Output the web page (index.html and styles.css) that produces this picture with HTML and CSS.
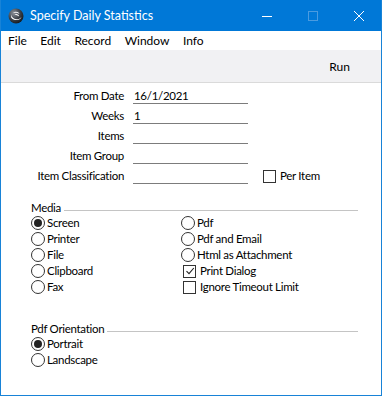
FILE: index.html
```html
<!DOCTYPE html>
<html lang="en">
<head>
    <meta charset="UTF-8">
    <title>Specify Daily Statistics</title>
    <link rel="stylesheet" href="styles.css">
</head>
<body>
    <div class="window">
        <!-- Title bar -->
        <div class="titlebar">
            <svg class="app-icon" width="16" height="16" viewBox="0 0 16 16">
                <defs>
                    <radialGradient id="ball" cx="35%" cy="30%" r="75%">
                        <stop offset="0" stop-color="#8a9099"/>
                        <stop offset="0.6" stop-color="#3a3f46"/>
                        <stop offset="1" stop-color="#15181c"/>
                    </radialGradient>
                </defs>
                <circle cx="8" cy="8" r="7.5" fill="url(#ball)"/>
                <path d="M3 6.5 C4 11 10 13.5 13.5 9 C12.5 12.5 6 13.5 3.2 9.5 Z" fill="#fff"/>
                <path d="M5 5 C7 3 10.5 3.5 11.5 6 C10 4.8 7.5 4.5 5 5 Z" fill="#fff"/>
                <path d="M6.5 6.5 C8.5 5.5 11 6.5 11.2 8.5 C9.5 7.2 8 7 6.5 6.5 Z" fill="#fff"/>
            </svg>
            <span class="title">Specify Daily Statistics</span>
            <div class="controls">
                <span class="ctl"><svg width="10" height="10" viewBox="0 0 10 10"><path d="M0 5.5h10" stroke="#fff" stroke-width="1"/></svg></span>
                <span class="ctl"><svg width="10" height="10" viewBox="0 0 10 10"><rect x="0.5" y="0.5" width="9" height="9" fill="none" stroke="#4a9be0" stroke-width="1"/></svg></span>
                <span class="ctl"><svg width="10" height="10" viewBox="0 0 10 10"><path d="M0 0L10 10M10 0L0 10" stroke="#fff" stroke-width="1"/></svg></span>
            </div>
        </div>

        <!-- Menu bar -->
        <div class="menubar">
            <span>File</span>
            <span>Edit</span>
            <span>Record</span>
            <span>Window</span>
            <span>Info</span>
        </div>

        <!-- Button bar -->
        <div class="toolbar">
            <span class="run">Run</span>
        </div>

        <div class="content">
            <!-- Specification fields -->
            <div class="form">
                <label>From Date</label><div class="field">16/1/2021</div><div></div>
                <label>Weeks</label><div class="field">1</div><div></div>
                <label>Items</label><div class="field"></div><div></div>
                <label>Item Group</label><div class="field"></div><div></div>
                <label>Item Classification</label><div class="field"></div>
                <div class="check"><span class="box"></span>Per Item</div>
            </div>

            <!-- Media -->
            <div class="section">
                <div class="section-head"><span>Media</span><div class="rule"></div></div>
                <div class="columns">
                    <div class="col">
                        <div class="radio on"><span class="dot"></span>Screen</div>
                        <div class="radio"><span class="dot"></span>Printer</div>
                        <div class="radio"><span class="dot"></span>File</div>
                        <div class="radio"><span class="dot"></span>Clipboard</div>
                        <div class="radio"><span class="dot"></span>Fax</div>
                    </div>
                    <div class="col">
                        <div class="radio"><span class="dot"></span>Pdf</div>
                        <div class="radio"><span class="dot"></span>Pdf and Email</div>
                        <div class="radio"><span class="dot"></span>Html as Attachment</div>
                        <div class="check indent"><span class="box ticked"><svg width="10" height="10" viewBox="0 0 10 10"><path d="M1.5 5.2L4 7.7L8.8 2" fill="none" stroke="#222" stroke-width="1.1"/></svg></span>Print Dialog</div>
                        <div class="check indent"><span class="box"></span>Ignore Timeout Limit</div>
                    </div>
                </div>
            </div>

            <!-- Pdf Orientation -->
            <div class="section orientation">
                <div class="section-head"><span>Pdf Orientation</span><div class="rule"></div></div>
                <div class="radio on"><span class="dot"></span>Portrait</div>
                <div class="radio"><span class="dot"></span>Landscape</div>
            </div>
        </div>
    </div>
</body>
</html>
```

FILE: styles.css
```css
/* General Styles */
body {
    margin: 0;
    font-family: 'Lato', 'Noto Sans', sans-serif;
    font-size: 12px;
    color: #000;
    background: #fff;
}

.window {
    width: 380px;
    height: 395px;
    border: 1px solid #1883d7;
    border-top: none;
    background: #fff;
    display: flex;
    flex-direction: column;
    overflow: hidden;
}

/* Title bar */
.titlebar {
    height: 31px;
    background: #0078d7;
    color: #fff;
    display: flex;
    align-items: center;
    margin: 0 -1px;
    padding-left: 8px;
}

.app-icon {
    margin-top: 1px;
}

.title {
    margin-left: 6px;
    font-size: 12.5px;
}

.controls {
    margin-left: auto;
    display: flex;
}

.ctl {
    width: 46px;
    height: 31px;
    display: flex;
    align-items: center;
    justify-content: center;
}

/* Menu bar */
.menubar {
    height: 19px;
    display: flex;
    align-items: center;
    gap: 13.5px;
    padding-left: 7px;
}

/* Toolbar */
.toolbar {
    height: 32px;
    background: #f1f1f3;
    border-bottom: 1px solid #dadada;
    display: flex;
    align-items: center;
    justify-content: flex-end;
    padding-right: 31px;
}

/* Form */
.content {
    padding-top: 5px;
    font-size: 11.5px;
    letter-spacing: -0.3px;
}

.form {
    display: grid;
    grid-template-columns: 123px 115px auto;
    column-gap: 9px;
    row-gap: 4px;
    grid-auto-rows: 16px;
    align-items: center;
}

.form label {
    text-align: right;
    line-height: 16px;
}

.field {
    height: 15px;
    line-height: 16px;
    border-bottom: 1px solid #7c7c7c;
    padding-left: 1px;
}

.check {
    display: flex;
    align-items: center;
    line-height: 16px;
    height: 16px;
    margin-left: 6px;
}

.box {
    width: 11px;
    height: 11px;
    border: 1px solid #333;
    margin-right: 4px;
    display: flex;
    align-items: center;
    justify-content: center;
    background: #fff;
}

.check.indent {
    margin-left: 2px;
}

/* Sections */
.section {
    margin: 16px 23px 0 30px;
}

.orientation {
    margin-top: 26px;
}

.section-head {
    display: flex;
    align-items: center;
    height: 15px;
    line-height: 15px;
}

.rule {
    flex: 1;
    border-top: 1px solid #c4c4c4;
    margin-left: 3px;
    margin-top: 6px;
}

.columns {
    display: flex;
}

.col {
    width: 150px;
}

.radio {
    display: flex;
    align-items: center;
    height: 16px;
    line-height: 16px;
}

.dot {
    width: 12px;
    height: 12px;
    border: 1px solid #333;
    border-radius: 50%;
    margin-right: 2px;
    display: flex;
    align-items: center;
    justify-content: center;
}

.radio.on .dot::after {
    content: '';
    width: 8px;
    height: 8px;
    border-radius: 50%;
    background: #222;
}
```
